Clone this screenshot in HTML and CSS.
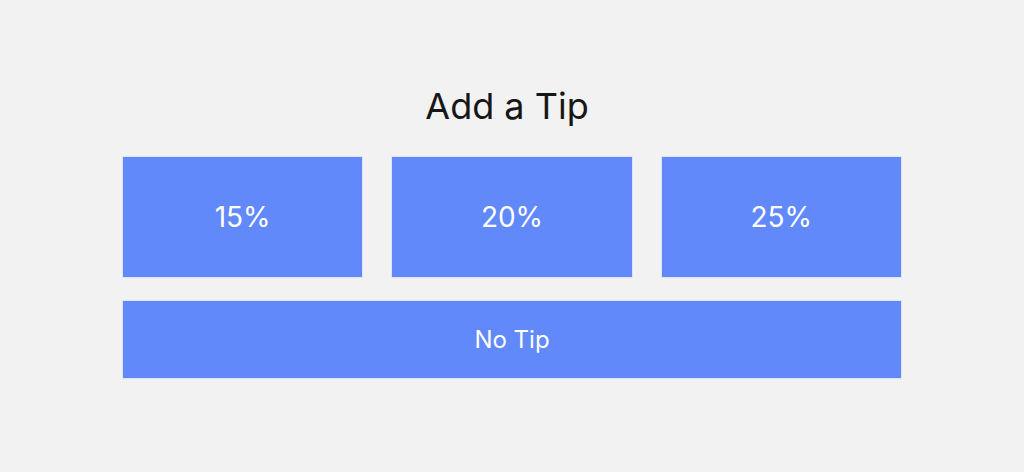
FILE: index.html
```html
<!DOCTYPE html>
<html lang="en">
<head>
<meta charset="utf-8">
<title>Add a Tip</title>
<link rel="stylesheet" href="styles.css">
</head>
<body>
<main class="tip">
  <h1 class="tip-title">Add a Tip</h1>
  <div class="tip-options">
    <button class="tip-btn tip-btn--pct">15%</button>
    <button class="tip-btn tip-btn--pct">20%</button>
    <button class="tip-btn tip-btn--pct">25%</button>
  </div>
  <button class="tip-btn tip-btn--none">No Tip</button>
</main>
</body>
</html>
```
FILE: styles.css
```css
html, body {
  margin: 0;
  padding: 0;
  background: #f2f2f2;
  font-family: Inter, "Noto Sans", sans-serif;
}
.tip {
  width: 780px;
  margin: 0 auto;
  padding-top: 84px;
  display: flex;
  flex-direction: column;
}
.tip-title {
  margin: 0 0 28px;
  text-align: center;
  font-size: 36px;
  font-weight: 400;
  line-height: 44px;
  color: #171717;
  padding-right: 10px;
}
.tip-options {
  display: grid;
  grid-template-columns: repeat(3, 1fr);
  gap: 28px;
  margin-bottom: 22px;
}
.tip-btn {
  font-family: inherit;
  background: #6189f9;
  color: #ffffff;
  border: 1px solid #dfe4f4;
  margin: 0;
  padding: 0;
  cursor: pointer;
}
.tip-btn--pct {
  height: 122px;
  font-size: 28px;
}
.tip-btn--none {
  height: 79px;
  font-size: 24px;
}
```
